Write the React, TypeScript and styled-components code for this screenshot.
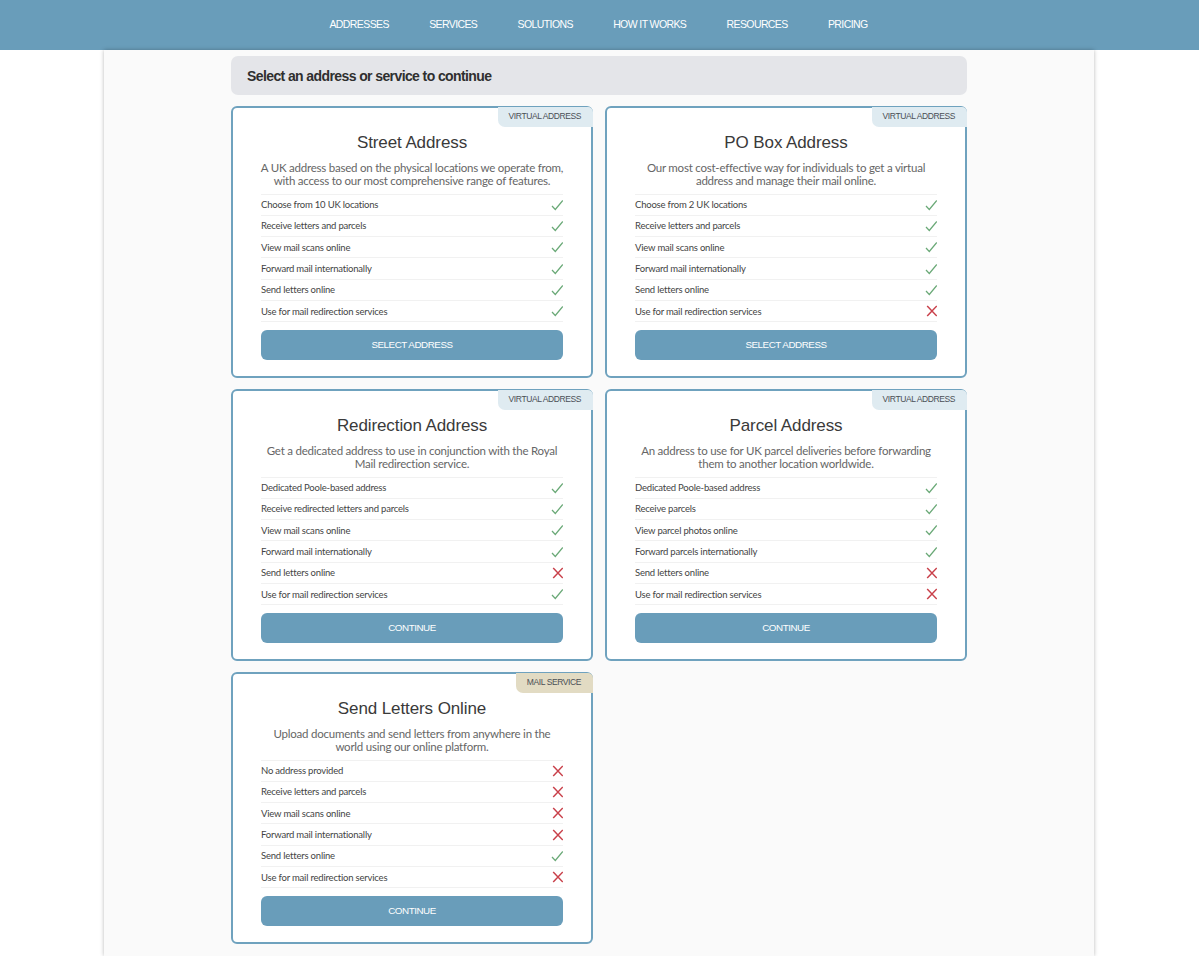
import React, { FC } from "react";
import styled, { createGlobalStyle } from "styled-components";

const COLORS = {
  blue: "#699dba",
  border: "#6fa2be",
  line: "#f1f1f1",
  green: "#6aa977",
  red: "#c9404a",
  text: "#3a3a3a",
};

const GlobalStyle = createGlobalStyle`
  html, body {
    margin: 0;
    padding: 0;
    background: #fff;
    font-family: "Lato", "Liberation Sans", sans-serif;
  }
  * { box-sizing: border-box; }
`;

type Feature = [string, boolean];

interface CardData {
  title: string;
  description: string[];
  tag: string;
  isMail?: boolean;
  button: string;
  features: Feature[];
}

const NAV = ["ADDRESSES", "SERVICES", "SOLUTIONS", "HOW IT WORKS", "RESOURCES", "PRICING"];

const CARDS: CardData[] = [
  {
    title: "Street Address",
    description: [
      "A UK address based on the physical locations we operate from,",
      "with access to our most comprehensive range of features.",
    ],
    tag: "VIRTUAL ADDRESS",
    button: "SELECT ADDRESS",
    features: [
      ["Choose from 10 UK locations", true],
      ["Receive letters and parcels", true],
      ["View mail scans online", true],
      ["Forward mail internationally", true],
      ["Send letters online", true],
      ["Use for mail redirection services", true],
    ],
  },
  {
    title: "PO Box Address",
    description: [
      "Our most cost-effective way for individuals to get a virtual",
      "address and manage their mail online.",
    ],
    tag: "VIRTUAL ADDRESS",
    button: "SELECT ADDRESS",
    features: [
      ["Choose from 2 UK locations", true],
      ["Receive letters and parcels", true],
      ["View mail scans online", true],
      ["Forward mail internationally", true],
      ["Send letters online", true],
      ["Use for mail redirection services", false],
    ],
  },
  {
    title: "Redirection Address",
    description: [
      "Get a dedicated address to use in conjunction with the Royal",
      "Mail redirection service.",
    ],
    tag: "VIRTUAL ADDRESS",
    button: "CONTINUE",
    features: [
      ["Dedicated Poole-based address", true],
      ["Receive redirected letters and parcels", true],
      ["View mail scans online", true],
      ["Forward mail internationally", true],
      ["Send letters online", false],
      ["Use for mail redirection services", true],
    ],
  },
  {
    title: "Parcel Address",
    description: [
      "An address to use for UK parcel deliveries before forwarding",
      "them to another location worldwide.",
    ],
    tag: "VIRTUAL ADDRESS",
    button: "CONTINUE",
    features: [
      ["Dedicated Poole-based address", true],
      ["Receive parcels", true],
      ["View parcel photos online", true],
      ["Forward parcels internationally", true],
      ["Send letters online", false],
      ["Use for mail redirection services", false],
    ],
  },
  {
    title: "Send Letters Online",
    description: [
      "Upload documents and send letters from anywhere in the",
      "world using our online platform.",
    ],
    tag: "MAIL SERVICE",
    isMail: true,
    button: "CONTINUE",
    features: [
      ["No address provided", false],
      ["Receive letters and parcels", false],
      ["View mail scans online", false],
      ["Forward mail internationally", false],
      ["Send letters online", true],
      ["Use for mail redirection services", false],
    ],
  },
];

const Tick: FC<{ ok: boolean }> = ({ ok }) =>
  ok ? (
    <Mark viewBox="0 0 12 12">
      <path d="M1 7 L4.3 10.5 L11.8 1.5" fill="none" stroke={COLORS.green} strokeWidth="1.25" />
    </Mark>
  ) : (
    <Mark viewBox="0 0 12 12">
      <path d="M2.2 1 L11.8 11 M11.8 1 L2.2 11" fill="none" stroke={COLORS.red} strokeWidth="1.5" />
    </Mark>
  );

const Card: FC<{ card: CardData }> = ({ card }) => (
  <Root>
    <Tag $isMail={card.isMail}>{card.tag}</Tag>
    <Title>{card.title}</Title>
    <Description>
      {card.description.map((line) => (
        <span key={line}>{line}</span>
      ))}
    </Description>
    <Features>
      {card.features.map(([label, ok]) => (
        <FeatureRow key={label}>
          {label}
          <Tick ok={ok} />
        </FeatureRow>
      ))}
    </Features>
    <Button>{card.button}</Button>
  </Root>
);

export default function App() {
  return (
    <>
      <GlobalStyle />
      <Nav>
        {NAV.map((item) => (
          <NavItem key={item}>{item}</NavItem>
        ))}
      </Nav>
      <Panel>
        <Content>
          <Heading>Select an address or service to continue</Heading>
          <Grid>
            {CARDS.map((card) => (
              <Card key={card.title} card={card} />
            ))}
          </Grid>
        </Content>
      </Panel>
    </>
  );
}

const Nav = styled.nav`
  height: 50px;
  background-color: ${COLORS.blue};
  display: flex;
  justify-content: center;
  align-items: center;
  gap: 40.3px;
  padding: 0 2px 3px 0;
`;

const NavItem = styled.a`
  color: #fff;
  font-size: 10.5px;
  letter-spacing: -0.6px;
  font-family: "Liberation Sans", sans-serif;
`;

const Panel = styled.main`
  width: 990px;
  height: 906px;
  overflow: hidden;
  margin-left: 104px;
  padding-top: 6px;
  background-color: #fafafa;
  box-shadow: 0 0 4px rgba(0, 0, 0, 0.28);
`;

const Content = styled.div`
  width: 736px;
  margin-left: 127px;
`;

const Heading = styled.h1`
  margin: 0 0 11px;
  height: 39px;
  padding-left: 16px;
  display: flex;
  align-items: center;
  border-radius: 7px;
  background-color: #e4e5e9;
  color: #2f2f2f;
  font-size: 14px;
  font-weight: 700;
  font-family: "Liberation Sans", sans-serif;
  letter-spacing: -0.6px;
`;

const Grid = styled.div`
  display: grid;
  grid-template-columns: 362px 362px;
  grid-auto-rows: 271.5px;
  column-gap: 12px;
  row-gap: 11.5px;
`;

const Root = styled.section`
  position: relative;
  padding: 0 28px;
  display: flex;
  flex-direction: column;
  background-color: #fff;
  border: 2px solid ${COLORS.border};
  border-radius: 6px;
`;

const Tag = styled.div<{ $isMail?: boolean }>`
  position: absolute;
  top: -1px;
  right: -2px;
  height: 20px;
  padding: 0 12px 3px 10.5px;
  display: flex;
  align-items: center;
  border-radius: 0 5px 0 7px;
  background-color: ${({ $isMail }) => ($isMail ? "#e2dbc3" : "#dfebf1")};
  color: #4a4f55;
  font-size: 8.5px;
  letter-spacing: -0.4px;
  font-family: "Liberation Sans", sans-serif;
`;

const Title = styled.h2`
  margin: 24px 0 0;
  height: 22px;
  line-height: 22px;
  text-align: center;
  color: ${COLORS.text};
  font-size: 17px;
  font-weight: 400;
  letter-spacing: -0.1px;
  font-family: "Liberation Sans", sans-serif;
`;

const Description = styled.p`
  margin: 7px 0 0;
  display: flex;
  flex-direction: column;
  align-items: center;
  color: #666;
  font-size: 11.5px;
  line-height: 13px;
  letter-spacing: -0.23px;
  white-space: nowrap;
`;

const Features = styled.ul`
  margin: 6.5px 0 0;
  padding: 0;
  list-style: none;
  border-top: 1px solid ${COLORS.line};
`;

const FeatureRow = styled.li`
  height: 21.33px;
  display: flex;
  justify-content: space-between;
  align-items: center;
  border-bottom: 1px solid ${COLORS.line};
  color: #444;
  font-size: 9.5px;
  letter-spacing: -0.2px;
`;

const Mark = styled.svg`
  width: 12px;
  height: 12px;
  flex: none;
`;

const Button = styled.button`
  margin-top: 8px;
  height: 30px;
  padding: 0 0 2px;
  border: none;
  border-radius: 6px;
  background-color: ${COLORS.blue};
  color: #fff;
  font-size: 9.8px;
  letter-spacing: -0.45px;
  font-family: "Liberation Sans", sans-serif;
`;
